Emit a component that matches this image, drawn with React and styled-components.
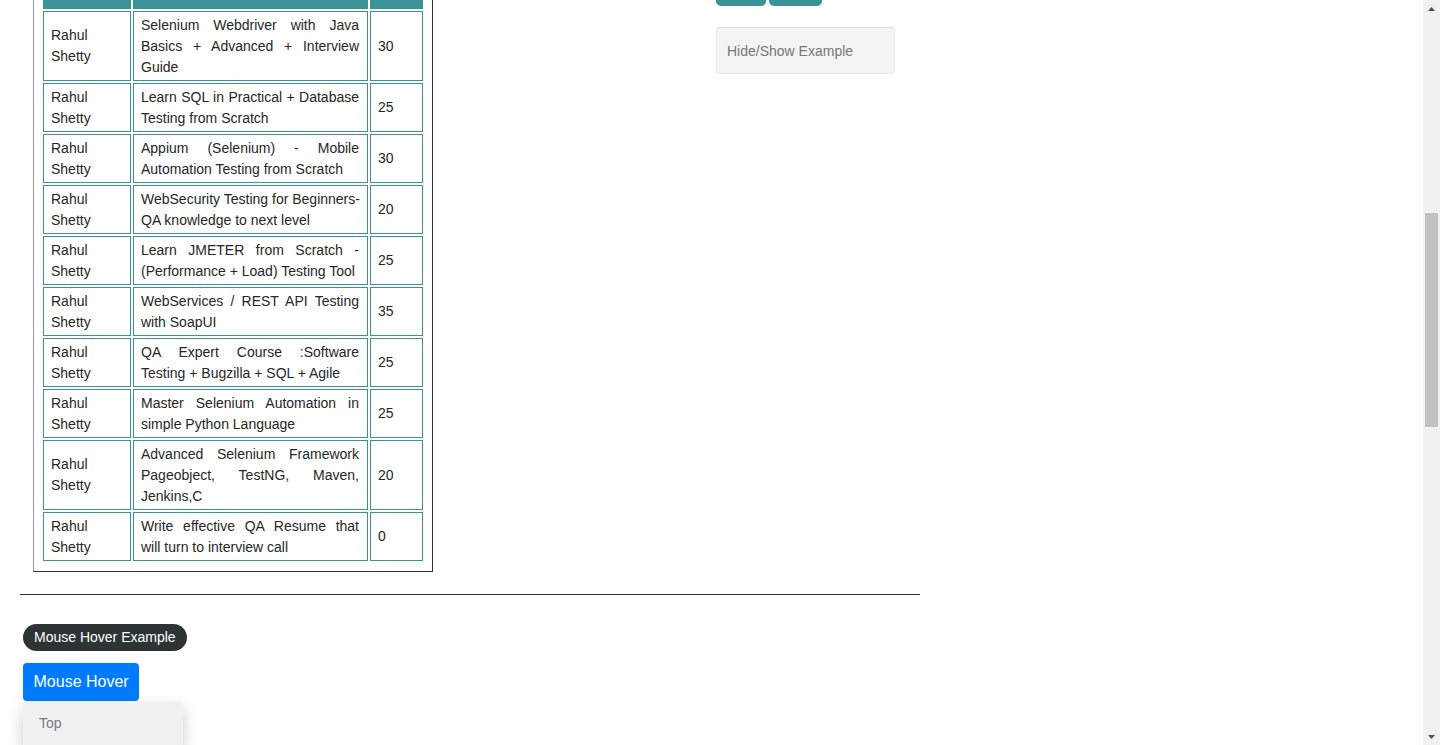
import React from "react";
import styled, { createGlobalStyle } from "styled-components";

const teal = "#3a9497";

const GlobalStyle = createGlobalStyle`
  html, body {
    margin: 0;
    padding: 0;
    height: 100%;
    overflow: hidden;
  }
  body {
    font-family: "Liberation Sans", Arial, sans-serif;
    font-size: 14px;
    color: #333;
    background: #fff;
  }
`;

const Page = styled.div`
  width: 900px;
  margin-left: 20px;
`;

const Row = styled.div`
  display: flex;
  justify-content: space-between;
  align-items: flex-start;
`;

const Fieldset = styled.section`
  padding-left: ${(p) => p.$pad}px;
  width: ${(p) => (p.$width ? `${p.$width}px` : "auto")};
`;

const Legend = styled.div`
  display: inline-block;
  height: 27px;
  line-height: 27px;
  padding: 0 11px;
  border-radius: 14px;
  background: #2d3435;
  color: #fff;
  font-size: 14px;
  margin-bottom: 12px;
`;

/* web table (its top part is scrolled out of view) */
const ProductTable = styled.table`
  margin-top: -2px;
  width: 400px;
  box-sizing: border-box;
  table-layout: fixed;
  border-collapse: separate;
  border-spacing: 2px;
  padding: 0 7px 8px 7px;
  border: 1px solid;
  border-top: none;
  border-color: #9a9a9a #333 #333 #9a9a9a;
  font-size: 14px;
  line-height: 21px;
`;

const HeadCell = styled.th`
  height: 9px;
  padding: 0;
  background: ${teal};
  border: 1px solid ${teal};
  box-sizing: border-box;
`;

const Td = styled.td`
  border: 1px solid ${teal};
  padding: 2.5px 8px 2.5px 7px;
  vertical-align: middle;
  color: #262626;
`;

const CourseLine = styled.span`
  display: block;
  white-space: nowrap;
  text-align: justify;
  text-align-last: ${(p) => (p.$last ? "left" : "justify")};
`;

/* element displayed example */
const StubButtons = styled.div`
  display: flex;
  gap: 3px;
  margin-bottom: 21px;
`;

const StubButton = styled.div`
  width: ${(p) => p.$w}px;
  height: 6px;
  border-radius: 0 0 5px 5px;
  background: ${teal};
`;

const DisplayedInput = styled.input`
  box-sizing: border-box;
  width: 179px;
  height: 47px;
  padding: 0 10px;
  border: 1px solid #e9e9e9;
  border-top-color: #dcdcdc;
  border-radius: 3px;
  background: #f4f4f4;
  font-family: inherit;
  font-size: 14px;
  color: #333;
  outline: none;

  &::placeholder {
    color: #777;
  }
`;

const Divider = styled.hr`
  margin: 22px 0 0;
  border: none;
  border-top: 1px solid #2f3333;
  height: 0;
`;

/* mouse hover */
const HoverSection = styled.section`
  margin-top: 29px;
  padding-left: 3px;
`;

const HoverWrap = styled.div`
  position: relative;
  display: inline-block;
`;

const HoverButton = styled.button`
  display: block;
  height: 38px;
  padding: 0 10.5px;
  border: none;
  border-radius: 4px;
  background: #007bff;
  color: #fff;
  font-family: inherit;
  font-size: 16px;
`;

const HoverMenu = styled.div`
  position: absolute;
  top: 100%;
  left: 0;
  width: 160px;
  background: #f1f1f1;
  box-shadow: 0 8px 16px rgba(0, 0, 0, 0.2);
  z-index: 2;
`;

const HoverItem = styled.a`
  display: block;
  padding: 12px 16px;
  line-height: 20px;
  color: #7a7a7a;
  font-size: 14px;
  text-decoration: none;
`;

/* window scrollbar */
const Scrollbar = styled.div`
  position: fixed;
  top: 0;
  right: 0;
  width: 17px;
  height: 100vh;
  background: #f1f1f1;
  display: flex;
  flex-direction: column;
  justify-content: space-between;
`;

const ArrowBox = styled.div`
  height: 17px;
  display: flex;
  align-items: center;
  justify-content: center;
`;

const Thumb = styled.div`
  position: absolute;
  left: 2px;
  right: 2px;
  top: 213px;
  height: 214px;
  background: #c1c1c1;
`;

const courses = [
  { lines: ["Selenium Webdriver with Java", "Basics + Advanced + Interview", "Guide"], price: 30 },
  { lines: ["Learn SQL in Practical + Database", "Testing from Scratch"], price: 25 },
  { lines: ["Appium (Selenium) - Mobile", "Automation Testing from Scratch"], price: 30 },
  { lines: ["WebSecurity Testing for Beginners-", "QA knowledge to next level"], price: 20 },
  { lines: ["Learn JMETER from Scratch -", "(Performance + Load) Testing Tool"], price: 25 },
  { lines: ["WebServices / REST API Testing", "with SoapUI"], price: 35 },
  { lines: ["QA Expert Course :Software", "Testing + Bugzilla + SQL + Agile"], price: 25 },
  { lines: ["Master Selenium Automation in", "simple Python Language"], price: 25 },
  { lines: ["Advanced Selenium Framework", "Pageobject, TestNG, Maven,", "Jenkins,C"], price: 20 },
  { lines: ["Write effective QA Resume that", "will turn to interview call"], price: 0 },
];

function App() {
  return (
    <>
      <GlobalStyle />
      <Page>
        <Row>
          <Fieldset $pad={13}>
            <ProductTable>
              <colgroup>
                <col style={{ width: 88 }} />
                <col style={{ width: 235 }} />
                <col style={{ width: 53 }} />
              </colgroup>
              <thead>
                <tr>
                  <HeadCell />
                  <HeadCell />
                  <HeadCell />
                </tr>
              </thead>
              <tbody>
                {courses.map((c, i) => (
                  <tr key={i}>
                    <Td>Rahul Shetty</Td>
                    <Td>
                      {c.lines.map((l, j) => (
                        <CourseLine key={j} $last={j === c.lines.length - 1}>
                          {l}
                        </CourseLine>
                      ))}
                    </Td>
                    <Td>{c.price}</Td>
                  </tr>
                ))}
              </tbody>
            </ProductTable>
          </Fieldset>
          <Fieldset $width={204} $pad={0}>
            <StubButtons>
              <StubButton $w={50} />
              <StubButton $w={53} />
            </StubButtons>
            <DisplayedInput placeholder="Hide/Show Example" />
          </Fieldset>
        </Row>

        <Divider />

        <HoverSection>
          <Legend>Mouse Hover Example</Legend>
          <div>
            <HoverWrap>
              <HoverButton>Mouse Hover</HoverButton>
              <HoverMenu>
                <HoverItem href="#top">Top</HoverItem>
              </HoverMenu>
            </HoverWrap>
          </div>
        </HoverSection>
      </Page>

      <Scrollbar>
        <ArrowBox>
          <svg width="7" height="4" viewBox="0 0 7 4">
            <polygon points="3.5,0 7,4 0,4" fill="#505050" />
          </svg>
        </ArrowBox>
        <Thumb />
        <ArrowBox>
          <svg width="7" height="4" viewBox="0 0 7 4">
            <polygon points="0,0 7,0 3.5,4" fill="#505050" />
          </svg>
        </ArrowBox>
      </Scrollbar>
    </>
  );
}

export default App;
